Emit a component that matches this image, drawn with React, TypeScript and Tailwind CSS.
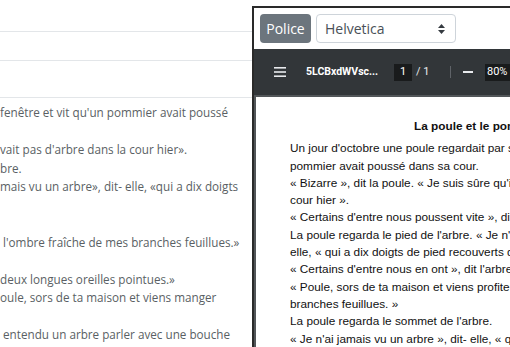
import React from "react";

const leftLines = [
  "fenêtre et vit qu'un pommier avait poussé",
  "",
  "vait pas d'arbre dans la cour hier».",
  "bre.",
  "mais vu un arbre», dit- elle, «qui a dix doigts",
  "",
  "",
  " l'ombre fraîche de mes branches feuillues.»",
  "",
  "deux longues oreilles pointues.»",
  "oule, sors de ta maison et viens manger",
  "",
  " entendu un arbre parler avec une bouche",
];

const pdfLines = [
  "Un jour d'octobre une poule regardait par sa fenêtre et vit qu'un",
  "pommier avait poussé dans sa cour.",
  "« Bizarre », dit la poule. « Je suis sûre qu'il n'y avait pas d'arbre dans la",
  "cour hier ».",
  "« Certains d'entre nous poussent vite », dit l'arbre.",
  "La poule regarda le pied de l'arbre. « Je n'ai jamais vu un arbre », dit-",
  "elle, « qui a dix doigts de pied recouverts de plumes ? »",
  "« Certains d'entre nous en ont », dit l'arbre.",
  "« Poule, sors de ta maison et viens profiter de l'ombre fraîche de mes",
  "branches feuillues. »",
  "La poule regarda le sommet de l'arbre.",
  "« Je n'ai jamais vu un arbre », dit- elle, « qui a deux longues oreilles",
];

function Toolbar() {
  return (
    <div className="h-[46px] bg-[#323639] flex items-center pl-[20px] text-white font-['Roboto',sans-serif] whitespace-nowrap shrink-0">
      <svg width="12" height="10" viewBox="0 0 12 10" className="shrink-0">
        <rect x="0" y="0" width="12" height="1.6" fill="#e8eaed" />
        <rect x="0" y="4.2" width="12" height="1.6" fill="#e8eaed" />
        <rect x="0" y="8.4" width="12" height="1.6" fill="#e8eaed" />
      </svg>
      <span className="ml-[20px] w-[88px] shrink-0 text-[10.5px] font-bold">5LCBxdWVsc...</span>
      <span className="w-[18px] h-[17px] shrink-0 bg-[#191b1c] text-[11px] flex items-center justify-center">1</span>
      <span className="ml-[4px] w-[14px] shrink-0 text-[11px] text-[#e8eaed]">/ 1</span>
      <span className="ml-[20px] w-px h-[12px] shrink-0 bg-[#5f6368]" />
      <span className="ml-[12px] w-[10px] h-[2px] shrink-0 bg-[#e8eaed]" />
      <span className="ml-[12px] w-[40px] h-[17px] shrink-0 bg-[#191b1c] text-[11px] flex items-center pl-[2px]">80%</span>
    </div>
  );
}

export default function App() {
  return (
    <div className="w-[510px] h-[347px] overflow-hidden flex bg-white">
      <div className="w-[252px] shrink-0 flex flex-col font-['Open_Sans',sans-serif] text-[#5a5f64]">
        <div className="h-[32px] border-b border-[#e3e6e9]" />
        <div className="h-[29px] border-b border-[#e3e6e9]" />
        <div className="h-[37px] border-b border-[#e3e6e9]" />
        <div className="pt-[5px] text-[11.7px] leading-[18.5px] whitespace-pre overflow-hidden">
          {leftLines.map((l, i) => (
            <div key={i} className="h-[18.5px]">{l}</div>
          ))}
        </div>
      </div>
      <div className="flex-1 mt-[6px] border-l-2 border-t-2 border-[#2a2a2a] flex flex-col overflow-hidden">
        <div className="h-[41px] flex items-center pl-[6px] gap-[5px] shrink-0">
          <div className="h-[29px] w-[51px] rounded-[4px] bg-[#6c757d] text-white text-[14px] flex items-center justify-center font-['Open_Sans',sans-serif]">
            Police
          </div>
          <div className="h-[29px] w-[140px] rounded-[4px] border border-[#ced4da] flex items-center justify-between pl-[8px] pr-[10px] text-[14px] text-[#495057] font-['Open_Sans',sans-serif]">
            <span>Helvetica</span>
            <svg width="7" height="10" viewBox="0 0 7 10">
              <path d="M3.5 0 L7 4 H0 Z" fill="#343a40" />
              <path d="M3.5 10 L7 6 H0 Z" fill="#343a40" />
            </svg>
          </div>
        </div>
        <Toolbar />
        <div className="flex-1 bg-[#525659] pl-[2px] pt-[2px]">
          <div className="h-full bg-white pt-[21px] pl-[34px] font-['Liberation_Sans',Arial,sans-serif] text-[11.8px] leading-[17.3px] text-[#111] whitespace-nowrap">
            <div className="pl-[124px] font-bold">La poule et le pommier</div>
            <div className="mt-[5px]">
              {pdfLines.map((l, i) => (
                <div key={i}>{l}</div>
              ))}
            </div>
          </div>
        </div>
      </div>
    </div>
  );
}
